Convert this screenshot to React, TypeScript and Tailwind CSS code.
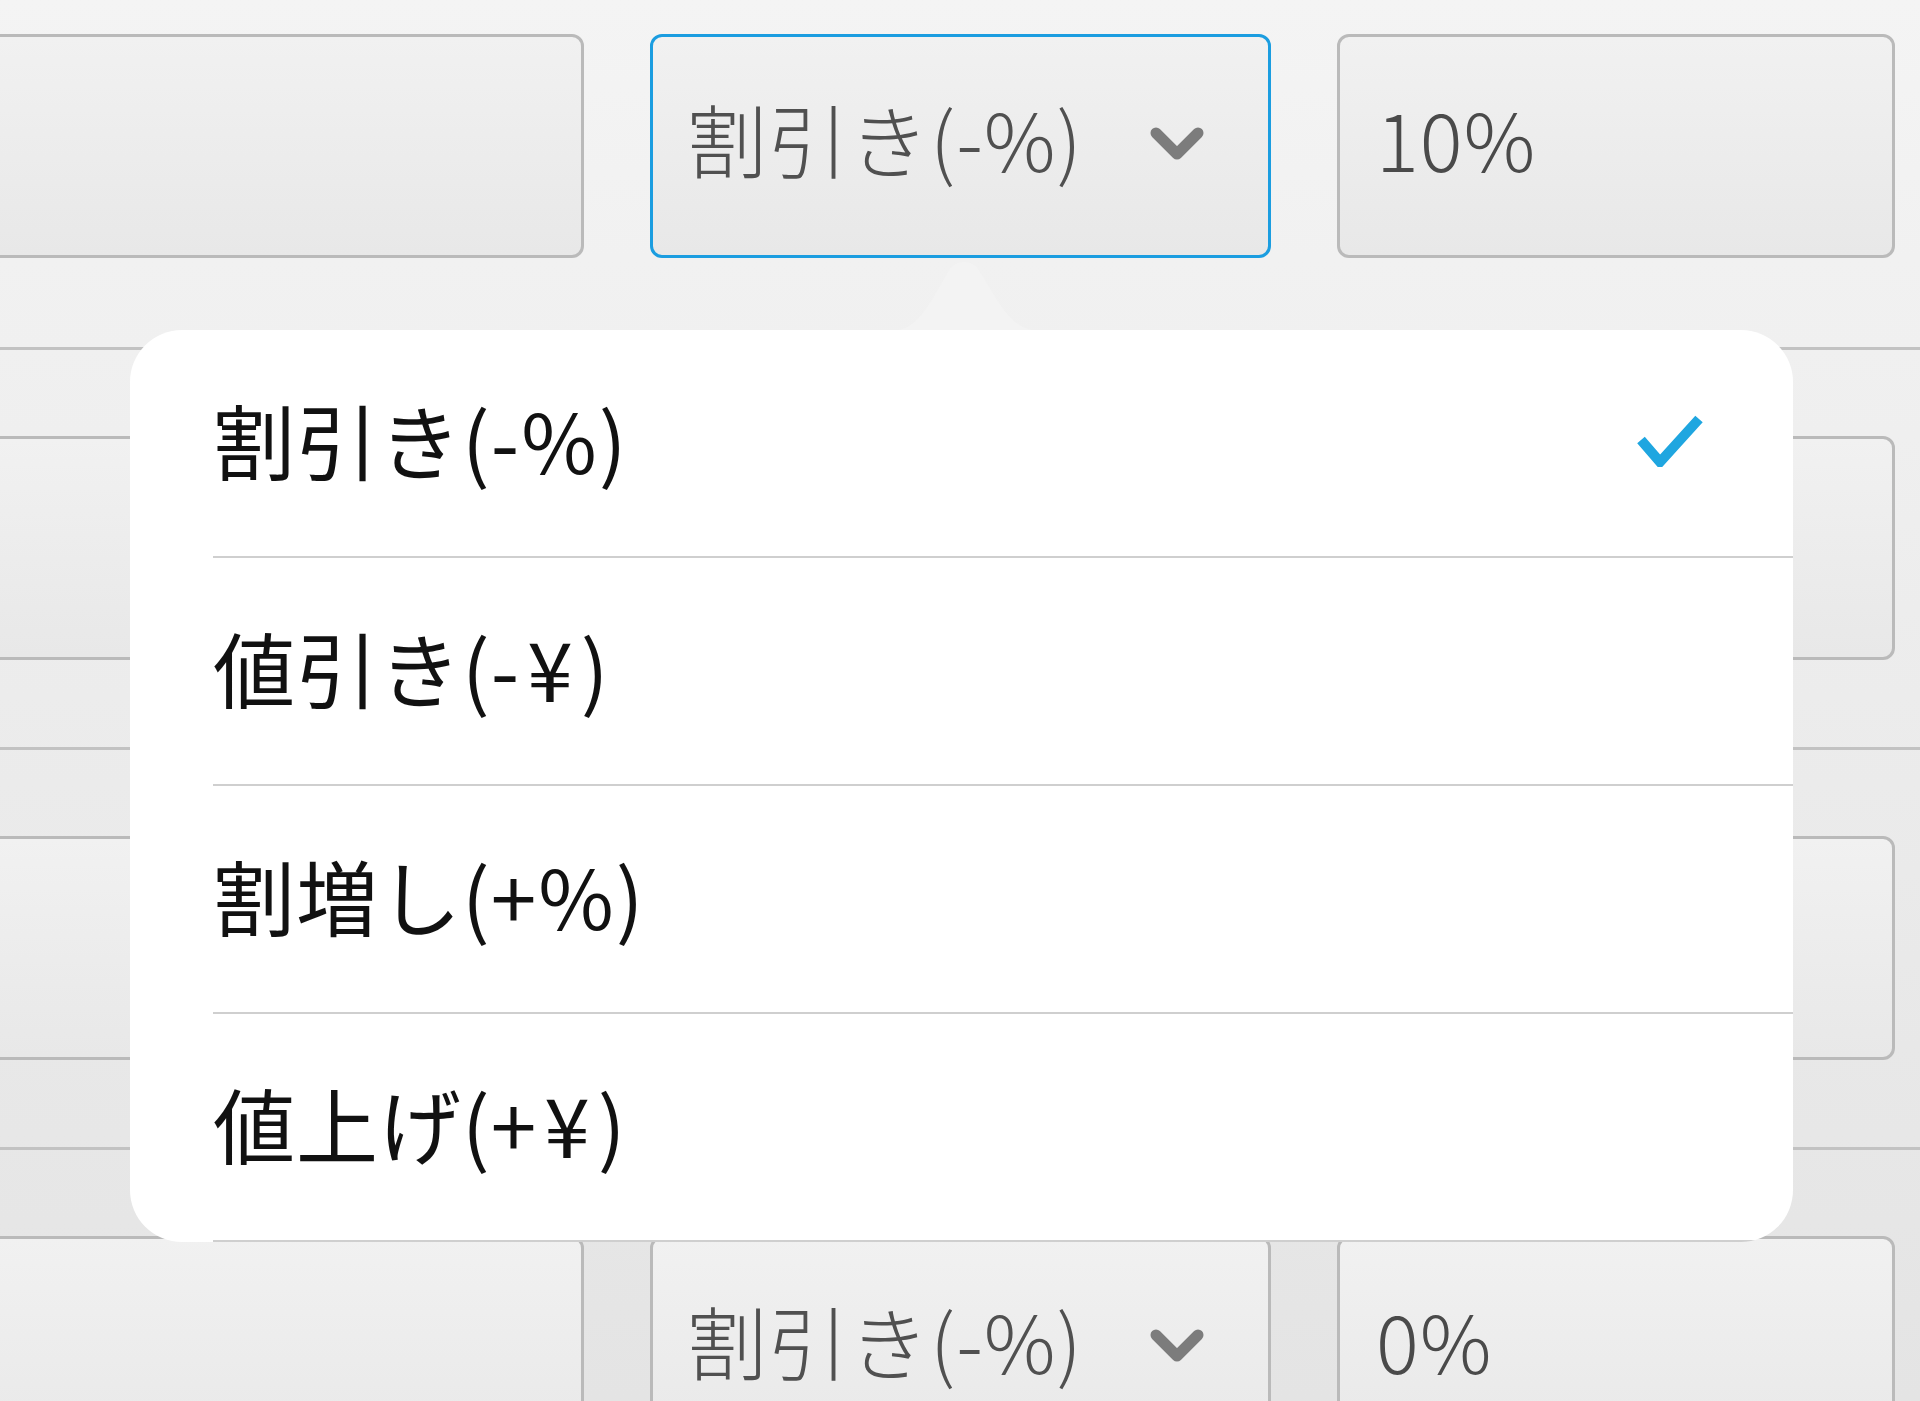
import React from "react";

const FONT = { fontFamily: '"Noto Sans CJK JP", "Noto Sans", sans-serif' };

function Field({ text, focused }: { text: string; focused?: boolean }) {
  return (
    <div
      className={
        "w-[621px] h-[224px] shrink-0 rounded-[12px] border-[3px] bg-gradient-to-b from-[#f1f1f1] to-[#e8e8e8] flex items-center justify-between pl-[34px] pr-[64px] " +
        (focused ? "border-[#1b9de0]" : "border-[#bababa]")
      }
    >
      <span className="text-[80px] leading-none font-light tracking-[1px] text-[#505050] pb-[18px]">{text}</span>
      <svg width="54" height="36" viewBox="0 0 54 36" className="shrink-0 -mt-[4px]">
        <polyline
          points="6,7 27,28 48,7"
          fill="none"
          stroke="#7c7c7c"
          strokeWidth="11"
          strokeLinecap="round"
          strokeLinejoin="round"
        />
      </svg>
    </div>
  );
}

function Row({ value, focused, first }: { value: string; focused?: boolean; first?: boolean }) {
  return (
    <div
      className={
        first
          ? "pt-[34px] pb-[89px]"
          : "border-t-[3px] border-[#c2c2c2] pt-[86px] pb-[87px]"
      }
    >
      <div className="flex gap-[66px] -ml-[40px]">
        <div className="w-[624px] h-[224px] shrink-0 rounded-[12px] border-[3px] border-[#bababa] bg-gradient-to-b from-[#f1f1f1] to-[#e8e8e8]" />
        <Field text="割引き(-%)" focused={focused} />
        <div className="w-[558px] h-[224px] shrink-0 rounded-[12px] border-[3px] border-[#bababa] bg-gradient-to-b from-[#f1f1f1] to-[#e8e8e8] flex items-center pl-[36px]">
          <span className="text-[80px] leading-none font-light tracking-[1px] text-[#4a4a4a] pb-[18px]">{value}</span>
        </div>
      </div>
    </div>
  );
}

const items: { head: string; sym: string }[] = [
  { head: "割引き(-", sym: "%" },
  { head: "値引き(-", sym: "¥" },
  { head: "割増し(+", sym: "%" },
  { head: "値上げ(+", sym: "¥" },
];

export default function App() {
  return (
    <div
      className="relative w-[1920px] h-[1401px] overflow-hidden bg-gradient-to-b from-[#f4f4f4] to-[#e4e4e4]"
      style={FONT}
    >
      <Row first focused value="10%" />
      <Row value="0%" />
      <Row value="0%" />
      <Row value="0%" />

      {/* popover pointer */}
      <svg
        className="absolute left-[889px] top-[262px]"
        width="152"
        height="69"
        viewBox="0 0 152 69"
      >
        <path
          d="M0,69 C22,69 31,56 43,38 L61,7 Q66,0 75,0 Q84,0 89,7 L108,38 C120,56 130,69 152,69 Z"
          fill="#f3f3f3"
        />
      </svg>

      {/* popover panel */}
      <div className="absolute left-[130px] top-[330px] w-[1663px] h-[912px] bg-white rounded-[52px] overflow-hidden">
        {items.map((t, i) => (
          <div
            key={t.head}
            className="ml-[83px] h-[228px] border-b-[2px] border-[#cfcfcf] flex items-center justify-between pr-[90px]"
          >
            <span className="text-[82px] leading-none tracking-[1px] text-[#111111] pb-[8px]">
              {t.head}
              <span className={t.sym === "¥" ? "mx-[7px]" : "mx-[1px]"}>{t.sym}</span>)
            </span>
            {i === 0 && (
              <svg width="66" height="52" viewBox="0 0 66 52" className="shrink-0 -mt-[4px]">
                <polyline
                  points="4,25 23,47 62,4"
                  fill="none"
                  stroke="#1fa6e0"
                  strokeWidth="10"
                  strokeLinejoin="miter"
                />
              </svg>
            )}
          </div>
        ))}
      </div>
    </div>
  );
}
